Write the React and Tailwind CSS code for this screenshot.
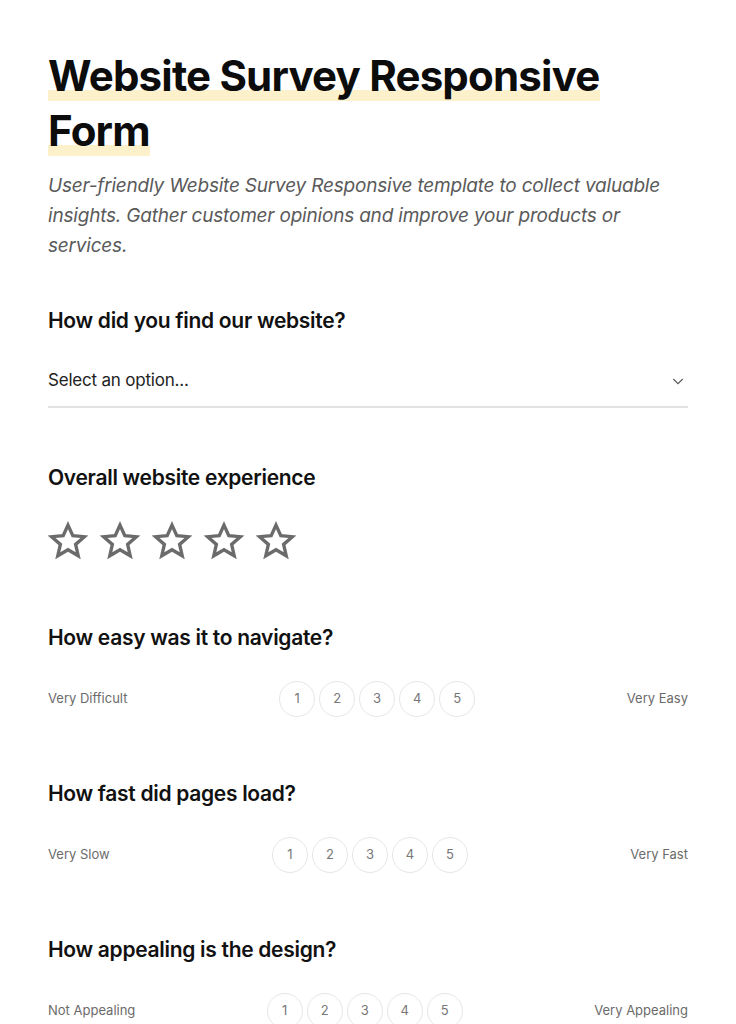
import React from 'react';

const font = { fontFamily: 'Inter, "Noto Sans", sans-serif' };

const Star = () => (
  <svg width="42" height="42" viewBox="0 0 24 24" fill="none" stroke="#6b6b6b" strokeWidth="1.9" strokeLinejoin="miter">
    <path d="M12 2.9l2.75 6.05 6.6.6-5 4.4 1.5 6.5L12 17 6.15 20.45l1.5-6.5-5-4.4 6.6-.6z" />
  </svg>
);

const Heading = ({ children }) => (
  <h2 className="text-[21px] font-semibold text-[#111] tracking-[-0.3px] leading-[28px]">{children}</h2>
);

const Scale = ({ question, left, right }) => (
  <div>
    <Heading>{question}</Heading>
    <div className="mt-[29px] flex items-center justify-between">
      <span className="text-[13px] text-[#6b6b6b]">{left}</span>
      <div className="flex gap-1">
        {[1, 2, 3, 4, 5].map((n) => (
          <button
            key={n}
            className="w-9 h-9 rounded-full border border-[#e6e6e6] text-[13px] text-[#777] flex items-center justify-center bg-white"
          >
            {n}
          </button>
        ))}
      </div>
      <span className="text-[13px] text-[#6b6b6b]">{right}</span>
    </div>
  </div>
);

export default function App() {
  return (
    <div className="min-h-screen bg-white px-12 pt-[48px] pb-12" style={font}>
      {/* Header */}
      <h1 className="text-[42px] font-bold leading-[55px] tracking-[-0.8px] text-[#0c0c0c]">
        <span className="[box-decoration-break:clone] bg-[linear-gradient(transparent_78%,#fdf1cc_78%)]">
          Website Survey Responsive Form
        </span>
      </h1>
      <p className="mt-[13px] text-[19px] italic leading-[30px] text-[#5a5a5a] tracking-[-0.2px]">
        User-friendly Website Survey Responsive template to collect valuable insights. Gather customer opinions and improve your products or services.
      </p>

      {/* Select */}
      <div className="mt-[46px]">
        <Heading>How did you find our website?</Heading>
        <div className="mt-[33px] flex items-center justify-between border-b-2 border-[#e2e2e2] pb-[12px]">
          <span className="text-[17px] text-[#222] tracking-[-0.2px]">Select an option...</span>
          <svg width="16" height="16" viewBox="0 0 24 24" fill="none" stroke="#555" strokeWidth="1.6" className="mr-[2px]">
            <path d="M5 9l7 7 7-7" />
          </svg>
        </div>
      </div>

      {/* Stars */}
      <div className="mt-[56px]">
        <Heading>Overall website experience</Heading>
        <div className="mt-[28px] flex gap-[10px] -ml-[1px]">
          {[0, 1, 2, 3, 4].map((i) => (
            <Star key={i} />
          ))}
        </div>
      </div>

      <div className="mt-[62px] flex flex-col gap-[63px]">
        <Scale question="How easy was it to navigate?" left="Very Difficult" right="Very Easy" />
        <Scale question="How fast did pages load?" left="Very Slow" right="Very Fast" />
        <Scale question="How appealing is the design?" left="Not Appealing" right="Very Appealing" />
      </div>
    </div>
  );
}
